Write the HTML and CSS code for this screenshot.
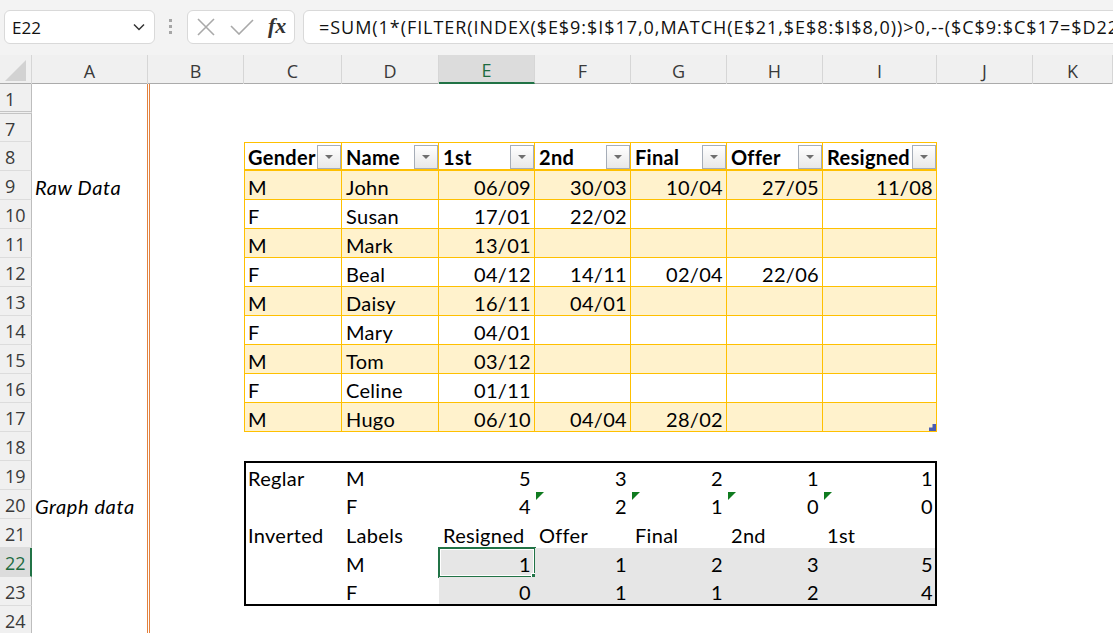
FILE: index.html
```html
<!DOCTYPE html>
<html lang="en">
<head>
<meta charset="utf-8">
<title>Sheet</title>
<link rel="stylesheet" href="styles.css">
</head>
<body>
<div class="app">
  <div class="toolbar">
    <div class="namebox">
      <span class="nb-text">E22</span>
      <svg class="chev" width="12" height="8" viewBox="0 0 12 8"><polyline points="1,1.5 6,6.5 11,1.5" fill="none" stroke="#333" stroke-width="1.5"/></svg>
    </div>
    <div class="grip">
      <svg width="4" height="16" viewBox="0 0 4 16"><rect x="0" y="0" width="3" height="3" fill="#a6a6a6"/><rect x="0" y="6" width="3" height="3" fill="#a6a6a6"/><rect x="0" y="12" width="3" height="3" fill="#a6a6a6"/></svg>
    </div>
    <div class="fxbox">
      <svg class="ico-x" width="18" height="18" viewBox="0 0 18 18"><path d="M1 1 L17 17 M17 1 L1 17" stroke="#a9a9a9" stroke-width="1.6" fill="none"/></svg>
      <svg class="ico-check" width="24" height="16" viewBox="0 0 24 16"><path d="M1 7 L9 15 L23 1" stroke="#a9a9a9" stroke-width="1.6" fill="none"/></svg>
      <span class="fx">fx</span>
    </div>
    <div class="formula">=SUM(1*(FILTER(INDEX($E$9:$I$17,0,MATCH(E$21,$E$8:$I$8,0))&gt;0,--($C$9:$C$17=$D22</div>
  </div>

  <div class="colhdr">
    <div class="corner"><svg width="21" height="21" viewBox="0 0 21 21"><polygon points="21,0 21,21 0,21" fill="#d2d2d2"/></svg></div>
    <div class="ch">A</div>
    <div class="ch">B</div>
    <div class="ch">C</div>
    <div class="ch">D</div>
    <div class="ch active">E</div>
    <div class="ch">F</div>
    <div class="ch">G</div>
    <div class="ch">H</div>
    <div class="ch">I</div>
    <div class="ch">J</div>
    <div class="ch">K</div>
  </div>

  <div class="sheet">
    <div class="row r-first"><div class="rh hid">1</div><div class="c a"></div></div>
    <div class="row r-seven"><div class="rh">7</div><div class="c a"></div></div>

    <div class="row">
      <div class="rh">8</div><div class="c a"></div><div class="c"></div>
      <div class="c t th first"><span>Gender</span><span class="fbtn"><i></i></span></div>
      <div class="c t th"><span>Name</span><span class="fbtn"><i></i></span></div>
      <div class="c t th"><span>1st</span><span class="fbtn"><i></i></span></div>
      <div class="c t th"><span>2nd</span><span class="fbtn"><i></i></span></div>
      <div class="c t th"><span>Final</span><span class="fbtn"><i></i></span></div>
      <div class="c t th"><span>Offer</span><span class="fbtn"><i></i></span></div>
      <div class="c t th"><span>Resigned</span><span class="fbtn"><i></i></span></div>
    </div>

    <div class="row">
      <div class="rh">9</div><div class="c a"><em>Raw Data</em></div><div class="c"></div>
      <div class="c t first band">M</div><div class="c t band">John</div>
      <div class="c t band r">06/09</div><div class="c t band r">30/03</div><div class="c t band r">10/04</div><div class="c t band r">27/05</div><div class="c t band r">11/08</div>
    </div>
    <div class="row">
      <div class="rh">10</div><div class="c a"></div><div class="c"></div>
      <div class="c t first">F</div><div class="c t">Susan</div>
      <div class="c t r">17/01</div><div class="c t r">22/02</div><div class="c t r"></div><div class="c t r"></div><div class="c t r"></div>
    </div>
    <div class="row">
      <div class="rh">11</div><div class="c a"></div><div class="c"></div>
      <div class="c t first band">M</div><div class="c t band">Mark</div>
      <div class="c t band r">13/01</div><div class="c t band r"></div><div class="c t band r"></div><div class="c t band r"></div><div class="c t band r"></div>
    </div>
    <div class="row">
      <div class="rh">12</div><div class="c a"></div><div class="c"></div>
      <div class="c t first">F</div><div class="c t">Beal</div>
      <div class="c t r">04/12</div><div class="c t r">14/11</div><div class="c t r">02/04</div><div class="c t r">22/06</div><div class="c t r"></div>
    </div>
    <div class="row">
      <div class="rh">13</div><div class="c a"></div><div class="c"></div>
      <div class="c t first band">M</div><div class="c t band">Daisy</div>
      <div class="c t band r">16/11</div><div class="c t band r">04/01</div><div class="c t band r"></div><div class="c t band r"></div><div class="c t band r"></div>
    </div>
    <div class="row">
      <div class="rh">14</div><div class="c a"></div><div class="c"></div>
      <div class="c t first">F</div><div class="c t">Mary</div>
      <div class="c t r">04/01</div><div class="c t r"></div><div class="c t r"></div><div class="c t r"></div><div class="c t r"></div>
    </div>
    <div class="row">
      <div class="rh">15</div><div class="c a"></div><div class="c"></div>
      <div class="c t first band">M</div><div class="c t band">Tom</div>
      <div class="c t band r">03/12</div><div class="c t band r"></div><div class="c t band r"></div><div class="c t band r"></div><div class="c t band r"></div>
    </div>
    <div class="row">
      <div class="rh">16</div><div class="c a"></div><div class="c"></div>
      <div class="c t first">F</div><div class="c t">Celine</div>
      <div class="c t r">01/11</div><div class="c t r"></div><div class="c t r"></div><div class="c t r"></div><div class="c t r"></div>
    </div>
    <div class="row">
      <div class="rh">17</div><div class="c a"></div><div class="c"></div>
      <div class="c t first band">M</div><div class="c t band">Hugo</div>
      <div class="c t band r">06/10</div><div class="c t band r">04/04</div><div class="c t band r">28/02</div><div class="c t band r"></div>
      <div class="c t band r"><svg class="resize" width="7" height="7" viewBox="0 0 7 7"><path d="M3.5 0 H7 V7 H0 V3.5 H3.5 Z" fill="#4a5db2"/></svg></div>
    </div>

    <div class="row"><div class="rh">18</div><div class="c a"></div></div>

    <div class="row">
      <div class="rh">19</div><div class="c a"></div><div class="c"></div>
      <div class="c g bt bl">Reglar</div><div class="c g bt">M</div>
      <div class="c g bt r">5</div><div class="c g bt r">3</div><div class="c g bt r">2</div><div class="c g bt r">1</div><div class="c g bt br r">1</div>
    </div>
    <div class="row">
      <div class="rh">20</div><div class="c a"><em>Graph data</em></div><div class="c"></div>
      <div class="c g bl"></div><div class="c g">F</div>
      <div class="c g r">4</div>
      <div class="c g r"><i class="err"></i>2</div>
      <div class="c g r"><i class="err"></i>1</div>
      <div class="c g r"><i class="err"></i>0</div>
      <div class="c g br r"><i class="err"></i>0</div>
    </div>
    <div class="row">
      <div class="rh">21</div><div class="c a"></div><div class="c"></div>
      <div class="c g bl">Inverted</div><div class="c g">Labels</div>
      <div class="c g">Resigned</div><div class="c g">Offer</div><div class="c g">Final</div><div class="c g">2nd</div><div class="c g br">1st</div>
    </div>
    <div class="row">
      <div class="rh active">22</div><div class="c a"></div><div class="c"></div>
      <div class="c g bl"></div><div class="c g">M</div>
      <div class="c g r sel">1<span class="selbox"></span><span class="handle"></span></div>
      <div class="c g r sel">1</div><div class="c g r sel">2</div><div class="c g r sel">3</div><div class="c g br r sel">5</div>
    </div>
    <div class="row">
      <div class="rh">23</div><div class="c a"></div><div class="c"></div>
      <div class="c g bl bb"></div><div class="c g bb">F</div>
      <div class="c g bb r sel">0</div><div class="c g bb r sel">1</div><div class="c g bb r sel">1</div><div class="c g bb r sel">2</div><div class="c g bb br r sel">4</div>
    </div>
    <div class="row"><div class="rh">24</div><div class="c a"></div></div>
  </div>
</div>
</body>
</html>
```

FILE: styles.css
```css
html, body {
  margin: 0;
  padding: 0;
  background: #ffffff;
}
body {
  width: 1113px;
  height: 633px;
  overflow: hidden;
  font-family: "Open Sans", "Noto Sans", sans-serif;
}
.app {
  width: 1113px;
  height: 633px;
  overflow: hidden;
}

/* ---------- toolbar ---------- */
.toolbar {
  height: 55px;
  box-sizing: border-box;
  padding-top: 10px;
  background: #f3f3f3;
  display: flex;
  align-items: flex-start;
  overflow: hidden;
}
.namebox {
  margin-left: 4px;
  width: 151px;
  height: 34px;
  box-sizing: border-box;
  background: #fff;
  border: 1px solid #d9d9d9;
  border-radius: 6px;
  display: flex;
  align-items: center;
  padding: 0 9px 0 7px;
  font-size: 17px;
  color: #111;
}
.nb-text { flex: 1; }
.grip {
  width: 32px;
  height: 34px;
  display: flex;
  align-items: center;
  justify-content: center;
}
.fxbox {
  width: 108px;
  height: 34px;
  box-sizing: border-box;
  background: #fff;
  border: 1px solid #d9d9d9;
  border-radius: 6px;
  display: flex;
  align-items: center;
  padding-left: 9px;
}
.ico-x { margin-right: 15px; }
.ico-check { margin-right: 14px; }
.fx {
  font-family: "Liberation Serif", serif;
  font-style: italic;
  font-weight: bold;
  font-size: 22px;
  color: #333;
  margin-top: -2px;
}
.formula {
  flex: 1;
  margin-left: 8px;
  margin-right: -20px;
  height: 34px;
  box-sizing: border-box;
  background: #fff;
  border: 1px solid #d9d9d9;
  border-radius: 6px 0 0 6px;
  padding-left: 15px;
  display: flex;
  align-items: center;
  white-space: nowrap;
  overflow: hidden;
  font-size: 18px;
  letter-spacing: 0.95px;
  color: #111;
}

/* ---------- column header ---------- */
.colhdr {
  display: grid;
  grid-template-columns: 32px 116px 96px 98px 97px 96px 96px 96px 96px 114px 96px 1fr;
  height: 29px;
  box-sizing: border-box;
  background: #f0f0f0;
  border-bottom: 1px solid #ababab;
}
.corner {
  display: flex;
  align-items: flex-end;
  justify-content: flex-end;
  padding: 0 5px 3px 0;
  border-right: 1px solid #d6d6d6;
}
.ch {
  display: flex;
  align-items: center;
  justify-content: center;
  padding-top: 3px;
  box-sizing: border-box;
  font-size: 18px;
  color: #3a3a3a;
  border-right: 1px solid #d6d6d6;
}
.ch.active {
  background: #dcdcdc;
  color: #1d6b3f;
  border-bottom: 2px solid #217346;
}

/* ---------- sheet ---------- */
.row {
  display: grid;
  grid-template-columns: 32px 118px 94px 98px 97px 96px 96px 96px 96px 114px 96px 1fr;
  height: 29px;
}
.row.r-first { height: 30px; }
.row.r-seven { height: 28px; }

.rh {
  background: #f0f0f0;
  box-sizing: border-box;
  border-right: 1px solid #bdbdbd;
  border-bottom: 1px solid #dcdcdc;
  font-size: 18px;
  color: #3a3a3a;
  padding: 2px 0 0 5px;
  display: flex;
  align-items: center;
}
.rh.hid {
  border-bottom: 3px double #c4c4c4;
}
.rh.active {
  background: #dcdcdc;
  color: #1d6b3f;
  border-right: 2px solid #217346;
}

.c {
  position: relative;
  box-sizing: border-box;
  display: flex;
  align-items: center;
  padding: 3px 4px 0 4px;
  font-family: Lato, "Liberation Sans", sans-serif;
  font-size: 20px;
  letter-spacing: 0.3px;
  color: #000;
  white-space: nowrap;
  min-width: 0;
}
.c.r { justify-content: flex-end; }
.c.a {
  border-right: 3px double #e3823f;
  padding-left: 3px;
}
.c.a em {
  font-style: italic;
  letter-spacing: 0.6px;
}

/* table */
.t {
  border-right: 1px solid #ffc000;
  border-bottom: 1px solid #ffc000;
  padding-right: 3px;
}
.t.first {
  border-left: 1px solid #ffc000;
  padding-left: 3px;
}
.t.band { background: #fff2cc; }
.th {
  border-top: 1px solid #ffc000;
  border-bottom: 2px solid #ffc000;
  font-weight: 700;
  padding-top: 1px;
  padding-right: 0;
}
.fbtn {
  margin-left: auto;
  width: 24px;
  height: 24px;
  box-sizing: border-box;
  border: 1px solid #a6adb7;
  background: linear-gradient(#ffffff, #e8e8e8);
  display: flex;
  align-items: center;
  justify-content: center;
  flex-shrink: 0;
}
.fbtn i {
  width: 0;
  height: 0;
  border-left: 4px solid transparent;
  border-right: 4px solid transparent;
  border-top: 4px solid #6e6e6e;
}
.resize {
  position: absolute;
  right: 0;
  bottom: 0;
}

/* graph block */
.bt { border-top: 2px solid #000; }
.bb { border-bottom: 2px solid #000; }
.bl { border-left: 2px solid #000; padding-left: 2px; }
.br { border-right: 2px solid #000; padding-right: 2px; }
.sel { background: #e6e6e6; }
.err {
  position: absolute;
  left: 1px;
  top: 2px;
  width: 0;
  height: 0;
  border-top: 8px solid #0f7b1f;
  border-right: 8px solid transparent;
}
.selbox {
  position: absolute;
  left: -1px;
  top: -1px;
  right: -1px;
  bottom: -1px;
  border: 2px solid #217346;
  box-shadow: inset 0 0 0 1px #ffffff;
}
.handle {
  position: absolute;
  right: -4px;
  bottom: -4px;
  width: 6px;
  height: 6px;
  background: #217346;
  border: 1px solid #ffffff;
}
```
